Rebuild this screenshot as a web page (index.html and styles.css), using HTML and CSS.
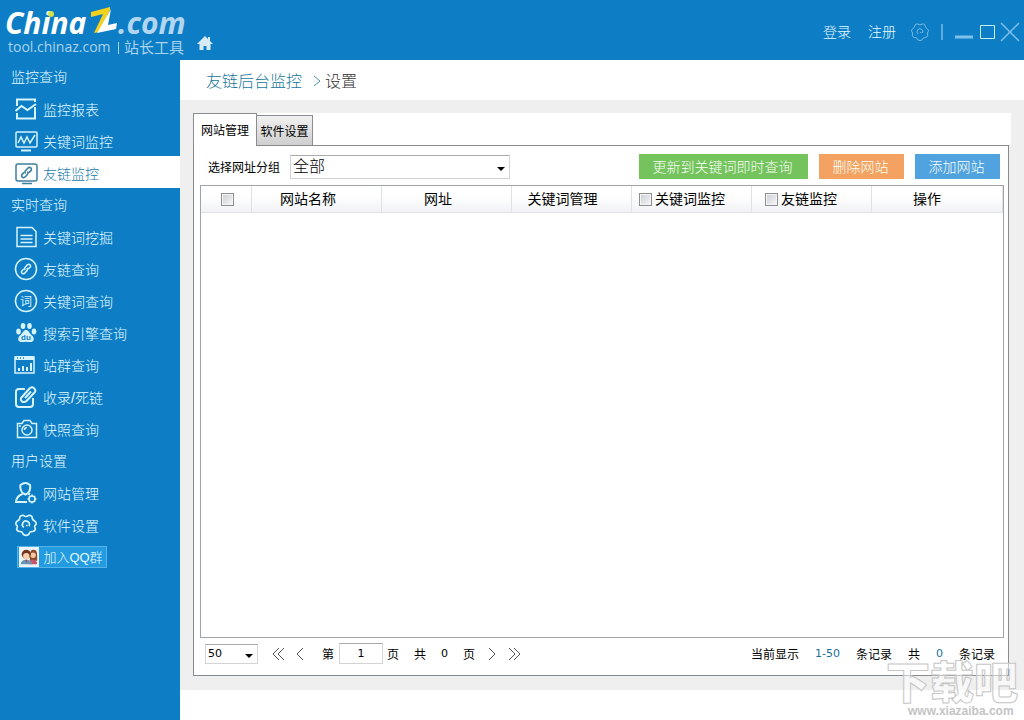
FILE: index.html
```html
<!DOCTYPE html>
<html lang="zh-CN">
<head>
<meta charset="utf-8">
<meta name="viewport" content="width=device-width, initial-scale=1">
<title>站长工具</title>
<link rel="stylesheet" href="styles.css">
</head>
<body>
<svg class="defs" aria-hidden="true">
  <symbol id="gear" viewBox="0 0 22 22">
    <path d="M8.600 2.200Q11 4.200 13.400 2.200Q15.500 1.800 16.600 3.500Q16.500 6.600 19.300 7.600Q20.900 8.900 20 10.800Q18 11.800 19.600 14.500Q19.400 16.500 17 17Q14.300 16.700 13.600 19.500Q11 21.500 8.400 19.500Q7.700 16.700 5 17Q2.600 16.500 2.400 14.500Q4 11.800 2 10.800Q1.100 8.900 2.700 7.600Q5.500 6.600 5.400 3.500Q6.500 1.800 8.600 2.200Z"/>
    <path d="M9 13.200a3.200 3.200 0 1 1 4.800-1.200M11 11.500h1.500"/>
  </symbol>
  <symbol id="link" viewBox="0 0 12 12">
    <path d="M5.300 6.800c-1.300-1-.6-2.200.3-3.100l1.700-1.800c2-1.700 4.200.4 2.700 2.400L8.300 6.100M6.700 5.200c1.300 1 .6 2.200-.3 3.100l-1.700 1.800c-2 1.700-4.200-.4-2.700-2.400l1.700-1.800"/>
  </symbol>
</svg>
<div class="app">
  <header class="topbar">
    <a class="brand" href="#" aria-label="ChinaZ.com 站长工具">
      <svg class="logo" viewBox="0 0 190 60">
        <text class="logo-name" x="5" y="34">China</text>
        <text class="logo-com" x="118" y="34">.com</text>
        <circle cx="51" cy="14" r="3" fill="#d5e04a"/>
        <path d="M91 12L110 7v3L99 32l-5 1 9-19-12 3z" fill="#f3d21e"/>
        <path d="M111 9L108 25l9-2-1 6-19 4z" fill="#fff"/>
        <text class="logo-sub" x="8" y="52">tool.chinaz.com</text>
        <path d="M118.500 42v12" stroke="#a9d3ee"/>
        <text class="logo-cn" x="124" y="53">站长工具</text>
      </svg>
    </a>
    <a class="home" href="#" aria-label="首页"><svg viewBox="0 0 18 16"><path d="M9 1L1 9h2.500v6h4v-4h3v4h4V9H17l-3-3V2h-2v2z" fill="#d8ebf7"/></svg></a>
    <nav class="account">
      <a href="#">登录</a>
      <a href="#">注册</a>
    </nav>
    <div class="window-tools">
      <button aria-label="设置"><svg class="tool-gear"><use href="#gear"/></svg></button>
      <span class="divider"></span>
      <button aria-label="最小化"><svg viewBox="0 0 20 20"><path d="M1 15h18" stroke-width="3"/></svg></button>
      <button aria-label="最大化"><svg viewBox="0 0 20 20"><path class="bright" d="M3.500 3.500h14v13h-14z"/></svg></button>
      <button aria-label="关闭"><svg viewBox="0 0 20 20"><path d="M1 1l18 18M19 1L1 19" stroke-width="1.500"/></svg></button>
    </div>
  </header>
  <div class="body">
    <nav class="sidebar">
      <h2>监控查询</h2>
      <a href="#"><svg viewBox="0 0 24 24"><path class="bold" d="M3 9V2.500h18V5M3 16v5.500h18V10M1.500 14l6-5 6 4 8.500-6"/></svg>监控报表</a>
      <a href="#"><svg viewBox="0 0 24 24"><rect x="2" y="3" width="21" height="15" rx="1"/><path d="M4 14l3-6 3 6 3-6 3 6 5-8"/><path class="bold" d="M7 21.500h10"/></svg>关键词监控</a>
      <a href="#" class="active"><svg viewBox="0 0 24 24"><rect x="2" y="3" width="21" height="17" rx="2"/><path d="M8 22.500h10"/><use href="#link" x="6" y="5" width="13" height="13"/></svg>友链监控</a>
      <h2>实时查询</h2>
      <a href="#"><svg viewBox="0 0 24 24"><path d="M3 2.500h15l4 4v15H3zM6.500 10.500h12M6.500 14h12M6.500 17.500h12"/></svg>关键词挖掘</a>
      <a href="#"><svg viewBox="0 0 24 24"><circle cx="12" cy="12" r="10.500"/><use href="#link" x="6" y="6" width="12" height="12"/></svg>友链查询</a>
      <a href="#"><svg viewBox="0 0 24 24"><circle cx="12" cy="12" r="10.500"/><text class="ci" x="6" y="17">词</text></svg>关键词查询</a>
      <a href="#"><svg viewBox="0 0 24 24"><g class="solid"><ellipse cx="9" cy="5" rx="2.300" ry="3"/><ellipse cx="15.500" cy="5" rx="2.300" ry="3"/><ellipse cx="4.500" cy="10.500" rx="2.300" ry="3"/><ellipse cx="20" cy="10.500" rx="2.300" ry="3"/><path d="M12 9c2.500 0 3 2.500 5 4.500 3 2.500 3.500 5 2 6.500-2 2-4 .7-7 .7s-5 1.300-7-.7c-1.500-1.500-1-4 2-6.500C9 11.500 9.500 9 12 9z"/></g><text class="du" x="7" y="19">du</text></svg>搜索引擎查询</a>
      <a href="#"><svg viewBox="0 0 24 24"><path d="M1 4h19v16H1z"/><path class="solid" d="M1 3h19v4H1z"/><path d="M3 5h1M6 5h1M9 5h1" stroke="#0d7ec5"/><path class="bold" d="M5 18v-3M9 18v-5M13 18v-4M17 18v-8"/></svg>站群查询</a>
      <a href="#"><svg viewBox="0 0 24 24"><path class="bold" d="M11 4H5Q2 4 2 7v12q0 3 3 3h11q3 0 3-3v-6"/><path class="bold" d="M7.500 12.500l8-9c3-3 7.500 1 5 4l-8 8.500c-3 2.500-7.500-.5-5-3.500zM11 13l6-6.500"/></svg>收录/死链</a>
      <a href="#"><svg viewBox="0 0 24 24"><path d="M3.500 6.500H8l2-3h6l2 3h4.500v14h-19z"/><circle cx="13" cy="13" r="5"/><path d="M10.500 13a2.500 2.500 0 0 1 2.500-2.500M5 9h2"/></svg>快照查询</a>
      <h2>用户设置</h2>
      <a href="#"><svg viewBox="0 0 24 24"><path class="bold" d="M6.500 4q5-4 9.500 0 1 5-2 8l-2.500 1.500L8.500 12q-3-4-2-8zM8.500 13q-6 2-6.500 8h11M14 12.500l2 1"/><circle cx="18" cy="18" r="3"/><path d="M18 13.500v2M18 20.500v2M13.500 18h2M20.500 18h2M15 15l1 1M20 20l1 1M21 15l-1 1M15 21l1-1"/></svg>网站管理</a>
      <a href="#"><svg viewBox="0 0 24 24"><use href="#gear" width="24" height="24"/></svg>软件设置</a>
      <div class="qq-row">
        <button class="qq"><svg viewBox="0 0 22 22"><path fill="#eef3f7" d="M0 0h22v22H0z"/><path d="M12 9q0-6 4-6t4 6v6h-8z" fill="#8c4a2f"/><circle cx="15.500" cy="9" r="3" fill="#f6c7a0"/><path d="M11 19q0-5 4.500-5t4.500 5z" fill="#c8566a"/><circle cx="8" cy="8" r="5" fill="#713721"/><circle cx="8" cy="10" r="3.500" fill="#f8d0ac"/><path d="M2 19q0-5 6-5t6 5z" fill="#6797b8"/><path d="M7 14h2l-1 4z" fill="#c33"/></svg><span>加入QQ群</span></button>
      </div>
    </nav>
    <main class="main">
      <div class="crumbs">
        <a href="#">友链后台监控</a>
        <svg viewBox="0 0 8 12"><path d="M1 1l6 5-6 5"/></svg>
        <span>设置</span>
      </div>
      <section class="workspace">
        <div class="tabs" role="tablist">
          <button class="tab current" role="tab" aria-selected="true">网站管理</button>
          <button class="tab" role="tab" aria-selected="false">软件设置</button>
        </div>
        <div class="panel">
          <div class="toolbar">
            <label for="group">选择网址分组</label>
            <div class="select group-select"><select id="group"><option>全部</option></select></div>
            <div class="actions">
              <button class="green">更新到关键词即时查询</button>
              <button class="orange">删除网站</button>
              <button class="blue">添加网站</button>
            </div>
          </div>
          <div class="grid">
            <table>
              <colgroup><col class="c-check"><col class="c-wide"><col class="c-wide"><col class="c-mid"><col class="c-mid"><col class="c-mid"><col></colgroup>
              <thead>
                <tr>
                  <th class="all"><label><input type="checkbox" aria-label="全选"></label></th>
                  <th class="name">网站名称</th>
                  <th class="name">网址</th>
                  <th class="manage">关键词管理</th>
                  <th class="pick"><label><input type="checkbox">关键词监控</label></th>
                  <th class="pick wide"><label><input type="checkbox">友链监控</label></th>
                  <th class="ops">操作</th>
                </tr>
              </thead>
            </table>
          </div>
          <div class="pager">
            <div class="select size-select"><select aria-label="每页条数"><option>50</option></select></div>
            <div class="pages">
              <button aria-label="首页"><svg viewBox="0 0 14 14"><path d="M7 1L1 7l6 6M12 1L6 7l6 6"/></svg></button>
              <button class="prev" aria-label="上一页"><svg viewBox="0 0 14 14"><path d="M9 1L3 7l6 6"/></svg></button>
              <label for="page">第</label>
              <input id="page" type="text" value="1">
              <span>页</span>
              <span class="gap">共</span>
              <span class="gap num">0</span>
              <span class="gap">页</span>
              <button class="next" aria-label="下一页"><svg viewBox="0 0 14 14"><path d="M3 1l6 6-6 6"/></svg></button>
              <button aria-label="末页"><svg viewBox="0 0 14 14"><path d="M2 1l6 6-6 6M7 1l6 6-6 6"/></svg></button>
            </div>
            <div class="summary"><span>当前显示</span><b>1-50</b><span>条记录</span><span>共</span><b>0</b><span>条记录</span></div>
          </div>
        </div>
      </section>
    </main>
  </div>
  <svg class="watermark" viewBox="0 0 140 70" aria-hidden="true">
    <text class="mark-cn" x="2" y="49">下载吧</text>
    <text class="mark-url" x="24" y="65">www.xiazaiba.com</text>
  </svg>
</div>
</body>
</html>
```
FILE: styles.css
```css
* { box-sizing: border-box; }
body {
  margin: 0;
  font-family: "Liberation Sans", "Noto Sans CJK SC", sans-serif;
  font-size: 14px;
  font-weight: 300;
  color: #000;
}
button, input, select { font: inherit; color: inherit; }
button { border: 0; padding: 0; background: none; cursor: pointer; }
a { color: inherit; text-decoration: none; }
svg { display: block; fill: none; stroke: none; }
.defs { position: absolute; width: 0; height: 0; }

.app { position: relative; display: flex; flex-direction: column; min-height: 100vh; background: #fff; }

.topbar { display: flex; height: 60px; background: #0d7ec5; color: #e6fbff; }
.logo { width: 190px; height: 60px; }
.logo-name, .logo-com { font: italic 700 30px "Open Sans", sans-serif; }
.logo-name { fill: #fff; }
.logo-com { fill: #b3d6f0; }
.logo-sub { font: 400 14px "Open Sans", sans-serif; fill: #a9d3ee; }
.logo-cn { font: 400 15px "Noto Sans CJK SC", sans-serif; fill: #a9d3ee; }
.home { align-self: flex-end; padding: 0 0 9px 6px; }
.home svg { width: 18px; height: 16px; }
.account { display: flex; gap: 17px; margin-left: auto; line-height: 64px; }
.window-tools { display: flex; align-items: center; gap: 3px; margin: 3px 4px 0 14px; }
.window-tools svg { width: 20px; height: 20px; stroke: #7fc1ea; }
.window-tools .bright { stroke: #c5f0fa; }
.window-tools .divider { width: 2px; height: 16px; margin: 0 8px; background: #5fadde; }

.body { display: flex; flex: 1; }
.sidebar { flex: none; width: 180px; background: #0d7ec5; color: #e2fbff; }
.sidebar h2 { height: 32px; margin: 0; padding-left: 11px; font-size: 14px; font-weight: 300; line-height: 34px; }
.sidebar a { display: flex; align-items: center; gap: 5px; height: 32px; padding: 1px 0 0 14px; }
.sidebar a svg { width: 24px; height: 24px; stroke: #d5f4fc; stroke-width: 1.500; }
.sidebar .bold { stroke-width: 2; }
.sidebar .solid { fill: #d5f4fc; stroke: none; }
.sidebar .ci { font-size: 12px; font-weight: 400; fill: #d5f4fc; stroke: none; }
.sidebar .du { font: 700 8px "Liberation Sans", sans-serif; fill: #0d7ec5; stroke: none; }
.sidebar .active { background: #fff; color: #1a7ca8; }
.sidebar .active svg { stroke: #3f7f9f; }
.qq-row { display: flex; align-items: center; height: 32px; padding: 1px 0 0 17px; }
.qq { display: flex; align-items: center; width: 90px; height: 22px; border: 1px solid #55b3e8; background: #229be0; color: #e9faff; font-size: 13px; }
.qq svg { width: 22px; height: 20px; }
.qq span { flex: 1; white-space: nowrap; }

.main { display: flex; flex: 1; flex-direction: column; min-width: 0; padding-bottom: 30px; }
.crumbs { display: flex; align-items: center; height: 40px; padding-left: 26px; font-size: 16px; color: #333; }
.crumbs a { color: #1b7899; }
.crumbs svg { width: 8px; height: 12px; margin: 2px 4px 0 11px; stroke: #4794af; }

.workspace { display: flex; flex: 1; flex-direction: column; padding: 13px 13px 14px; background: #efefef; font-weight: 400; }
.tabs { display: flex; align-items: flex-end; height: 32px; background: #fff; font-size: 12px; }
.tab { width: 56px; height: 30px; border: 1px solid #898c95; border-width: 1px 1px 0 0; background: linear-gradient(#f1f1f1, #cfcfcf); }
.tab.current { position: relative; width: 64px; height: 33px; margin-bottom: -1px; padding-bottom: 2px; border-left-width: 1px; background: #fff; }
.panel { display: flex; flex: 1; flex-direction: column; margin-right: 2px; padding: 0 4px 0 6px; border: 1px solid #868b90; background: #fff; }
.toolbar { display: flex; align-items: center; height: 39px; padding: 2px 4px 0 8px; font-size: 12px; }
.select { position: relative; border: 1px solid #d4d4d4; border-top-color: #aaa; background: #fff; }
.select::after { content: ""; position: absolute; right: 4px; top: 50%; border: 4px solid transparent; border-top-color: #000; border-bottom: 0; pointer-events: none; }
.select select { display: block; width: 100%; height: 100%; padding: 0 2px; border: 0; appearance: none; background: none; }
.group-select { width: 220px; height: 24px; margin-left: 10px; font-size: 16px; font-weight: 300; }
.actions { display: flex; gap: 11px; margin-left: auto; font-size: 14px; font-weight: 300; }
.actions button { width: 85px; height: 25px; padding: 0 2px 2px 0; color: #f8fff6; }
.actions .green { width: 169px; background: #74c35c; }
.actions .orange { background: #f3a261; }
.actions .blue { background: #50a3df; }

.grid { flex: 1; border: 1px solid #a0a3a8; }
.grid table { width: 100%; border-spacing: 0; table-layout: fixed; }
.c-check { width: 51px; }
.c-wide { width: 130px; }
.c-mid { width: 120px; }
.grid th { height: 27px; padding: 0; border: 1px solid #dfe1e5; border-width: 0 1px 1px 0; background: linear-gradient(#fff 40%, #f1f2f5); font-weight: 400; line-height: 26px; }
.grid th.name { padding-right: 17px; }
.grid th.manage { padding-right: 18px; }
.grid th.ops { padding-right: 20px; }
.grid th.pick { padding-left: 7px; text-align: left; }
.grid th.wide { padding-left: 13px; }
.grid th label { display: flex; align-items: center; gap: 3px; }
.grid th.all label { justify-content: center; height: 26px; padding-left: 2px; }
.grid input { width: 13px; height: 13px; margin: 0; border: 1px solid #8d8f93; outline: 1px solid #f4f4f4; outline-offset: -2px; appearance: none; background: linear-gradient(135deg, #cbcfd5, #f6f6f6); }

.pager { display: flex; align-items: center; height: 37px; padding: 0 9px 6px 5px; font-size: 12px; }
.size-select { width: 53px; height: 20px; font: 11px "DejaVu Sans", sans-serif; }
.pages { display: flex; align-items: center; margin-left: 14px; }
.pages svg { width: 14px; height: 14px; stroke: #555; }
.pages .prev { margin: 0 14px 0 8px; }
.pages .next { margin: 0 7px 0 11px; }
.pages input { width: 44px; height: 21px; margin: 0 4px 0 5px; padding: 0; border: 1px solid #d4d4d4; border-top-color: #aaa; font: 11px "DejaVu Sans", sans-serif; text-align: center; }
.pages .gap { margin-left: 15px; }
.pages .num, .summary b { font: 11px "DejaVu Sans", sans-serif; }
.summary { display: flex; align-items: center; gap: 16px; margin-left: auto; }
.summary b { color: #1c7199; }

.watermark { position: absolute; right: 0; bottom: 0; width: 140px; height: 70px; overflow: visible; pointer-events: none; }
.mark-cn { font: 900 44px "Noto Sans CJK SC", sans-serif; fill: rgba(255, 255, 255, 0.5); stroke: #c6c6c6; stroke-width: 1; }
.mark-url { font: 700 12px "Liberation Sans", sans-serif; fill: #c4c4c4; }
```
